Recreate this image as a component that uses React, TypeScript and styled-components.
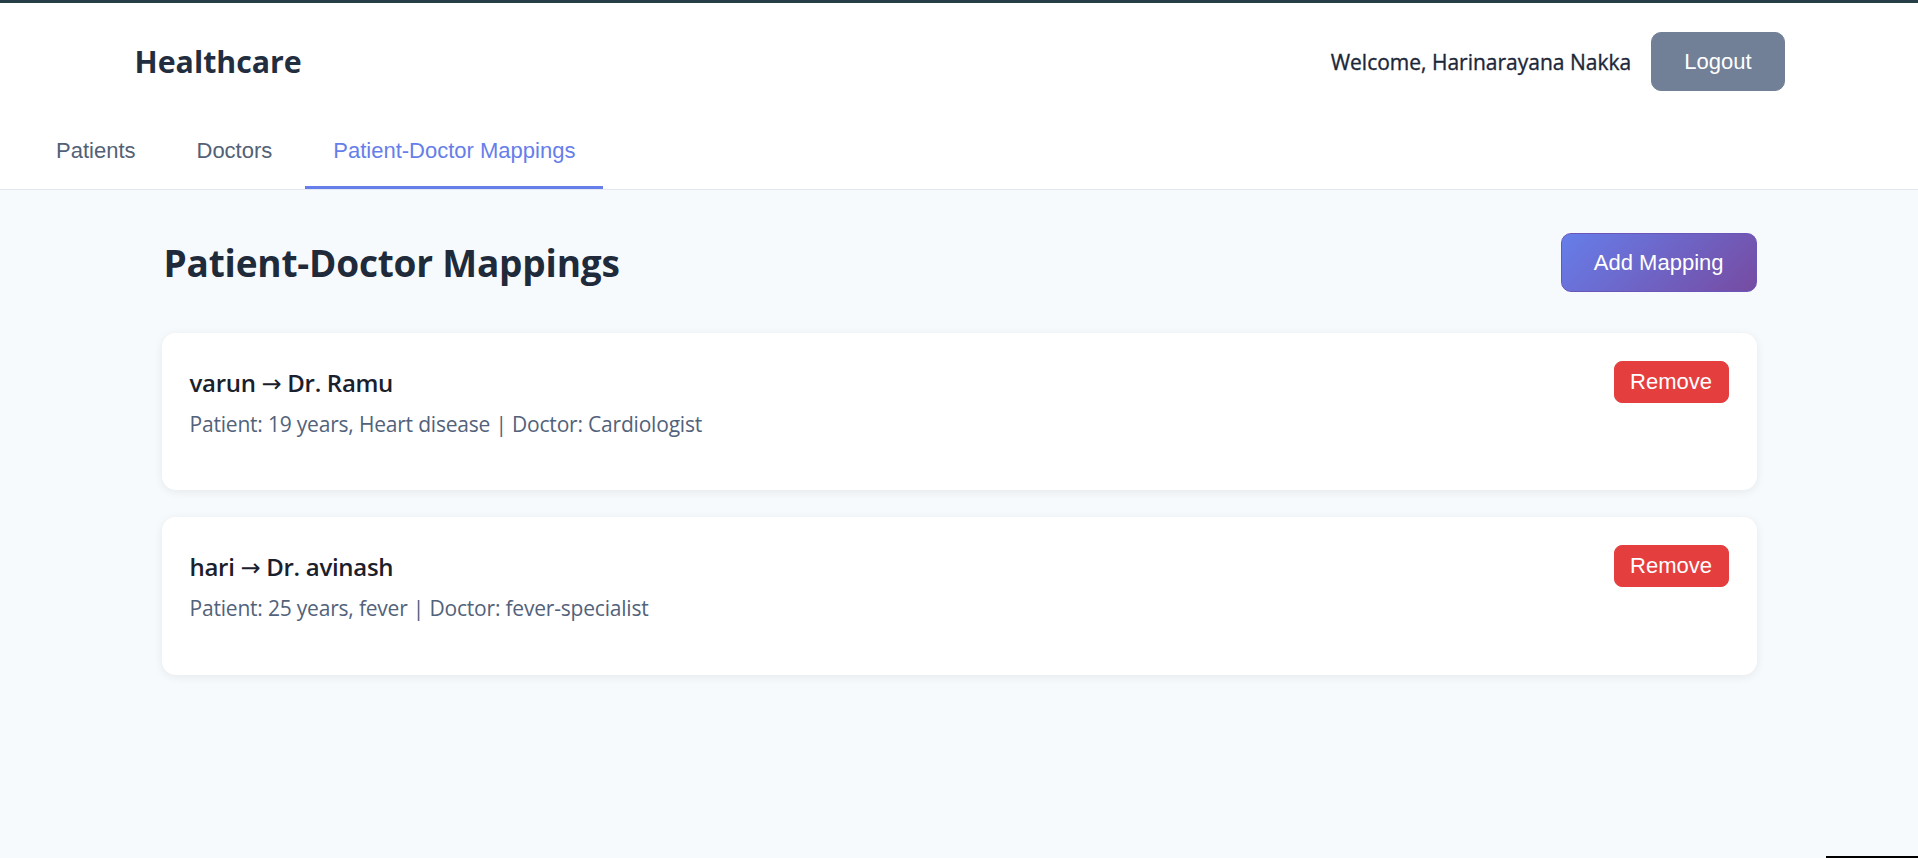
import React, { useState } from "react";
import styled, { createGlobalStyle, css } from "styled-components";

const GlobalStyle = createGlobalStyle`
  html, body {
    margin: 0;
    padding: 0;
    background: #f7fafc;
    font-family: "Open Sans", "Noto Sans", "DejaVu Sans", sans-serif;
    color: #2d3748;
  }
  #root {
    min-height: 100vh;
  }
  * { box-sizing: border-box; }
`;

const Header = styled.header`
  background: #ffffff;
  border-top: 3px solid #263e45;
  border-bottom: 1px solid #e2e8f0;
`;

const HeaderBar = styled.div`
  max-width: 1651px;
  margin: 0 auto;
  padding: 29px 0 0 1px;
  display: flex;
  align-items: center;
  justify-content: space-between;
`;

const Brand = styled.h1`
  margin: 0;
  font-size: 30.3px;
  font-weight: 700;
  color: #222e40;
`;

const UserArea = styled.div`
  display: flex;
  align-items: center;
  gap: 20px;
`;

const Welcome = styled.span`
  font-size: 21px;
  font-weight: 500;
  color: #1c2739;
  -webkit-text-stroke: 0.35px #1c2739;
`;

type Variant = "neutral" | "primary" | "danger";

const variants: Record<Variant, ReturnType<typeof css>> = {
  neutral: css`
    background: #718096;
    border-color: #718096;
    padding: 15.5px 32px;
    border-radius: 10px;
  `,
  primary: css`
    background: linear-gradient(135deg, #667eea 0%, #764ba2 100%);
    border-color: #6a55b8;
    padding: 15.5px 32px;
    border-radius: 10px;
  `,
  danger: css`
    background: #e53e3e;
    border-color: #e53e3e;
    padding: 7px 15.5px;
    border-radius: 8px;
  `,
};

const Button = styled.button<{ $variant: Variant }>`
  font-family: "Liberation Sans", Arial, sans-serif;
  font-size: 22px;
  line-height: normal;
  color: #ffffff;
  border: 1px solid transparent;
  cursor: pointer;
  white-space: nowrap;
  ${(p) => variants[p.$variant]}
`;

const TabNav = styled.nav`
  display: flex;
  gap: 5px;
  padding-left: 28px;
  margin-top: 22px;
`;

const Tab = styled.button<{ $active?: boolean }>`
  font-family: "Liberation Sans", Arial, sans-serif;
  font-size: 22px;
  line-height: normal;
  background: none;
  border: none;
  border-bottom: 3px solid ${(p) => (p.$active ? "#667eea" : "transparent")};
  color: ${(p) => (p.$active ? "#667eea" : "#526176")};
  padding: 25px 28px 22px;
  cursor: pointer;
`;

const Main = styled.main`
  padding: 43px 0 40px;
`;

const Container = styled.div`
  max-width: 1595px;
  margin: 0 auto;
`;

const SectionHeader = styled.div`
  display: flex;
  align-items: center;
  justify-content: space-between;
  margin-bottom: 41px;
  padding-left: 2px;
`;

const SectionTitle = styled.h2`
  margin: 0;
  font-size: 37px;
  font-weight: 700;
  letter-spacing: -0.2px;
  color: #1f2a3a;
`;

const CardList = styled.div`
  display: flex;
  flex-direction: column;
  gap: 27px;
`;

const Card = styled.div`
  background: #ffffff;
  border-radius: 14px;
  padding: 28px;
  box-shadow: 0 2px 10px rgba(0, 0, 0, 0.07);
`;

const CardRow = styled.div`
  display: flex;
  align-items: center;
  justify-content: space-between;
`;

const CardTitle = styled.h3`
  margin: 0;
  font-size: 24px;
  font-weight: 600;
  letter-spacing: -0.3px;
  color: #1a202c;
`;

const Arrow = styled.span`
  font-weight: 400;
`;

const CardMeta = styled.p`
  margin: 7px 0 23px;
  font-size: 21px;
  line-height: 1.4;
  letter-spacing: -0.2px;
  color: #52627a;
`;

const CornerMark = styled.div`
  position: fixed;
  right: 0;
  bottom: 0;
  width: 92px;
  height: 2px;
  background: #000000;
`;

const mappings = [
  {
    id: 1,
    patient: "varun",
    doctor: "Dr. Ramu",
    age: 19,
    illness: "Heart disease",
    specialty: "Cardiologist",
  },
  {
    id: 2,
    patient: "hari",
    doctor: "Dr. avinash",
    age: 25,
    illness: "fever",
    specialty: "fever-specialist",
  },
];

const tabs = ["Patients", "Doctors", "Patient-Doctor Mappings"];

export default function App() {
  const [active, setActive] = useState(2);
  return (
    <>
      <GlobalStyle />
      <Header>
        <HeaderBar>
          <Brand>Healthcare</Brand>
          <UserArea>
            <Welcome>Welcome, Harinarayana Nakka</Welcome>
            <Button $variant="neutral">Logout</Button>
          </UserArea>
        </HeaderBar>
        <TabNav>
          {tabs.map((t, i) => (
            <Tab key={t} $active={i === active} onClick={() => setActive(i)}>
              {t}
            </Tab>
          ))}
        </TabNav>
      </Header>
      <Main>
        <Container>
          <SectionHeader>
            <SectionTitle>Patient-Doctor Mappings</SectionTitle>
            <Button $variant="primary">Add Mapping</Button>
          </SectionHeader>
          <CardList>
            {mappings.map((m) => (
              <Card key={m.id}>
                <CardRow>
                  <CardTitle>
                    {m.patient} <Arrow>→</Arrow> {m.doctor}
                  </CardTitle>
                  <Button $variant="danger">Remove</Button>
                </CardRow>
                <CardMeta>
                  Patient: {m.age} years, {m.illness} | Doctor: {m.specialty}
                </CardMeta>
              </Card>
            ))}
          </CardList>
        </Container>
      </Main>
      <CornerMark />
    </>
  );
}
